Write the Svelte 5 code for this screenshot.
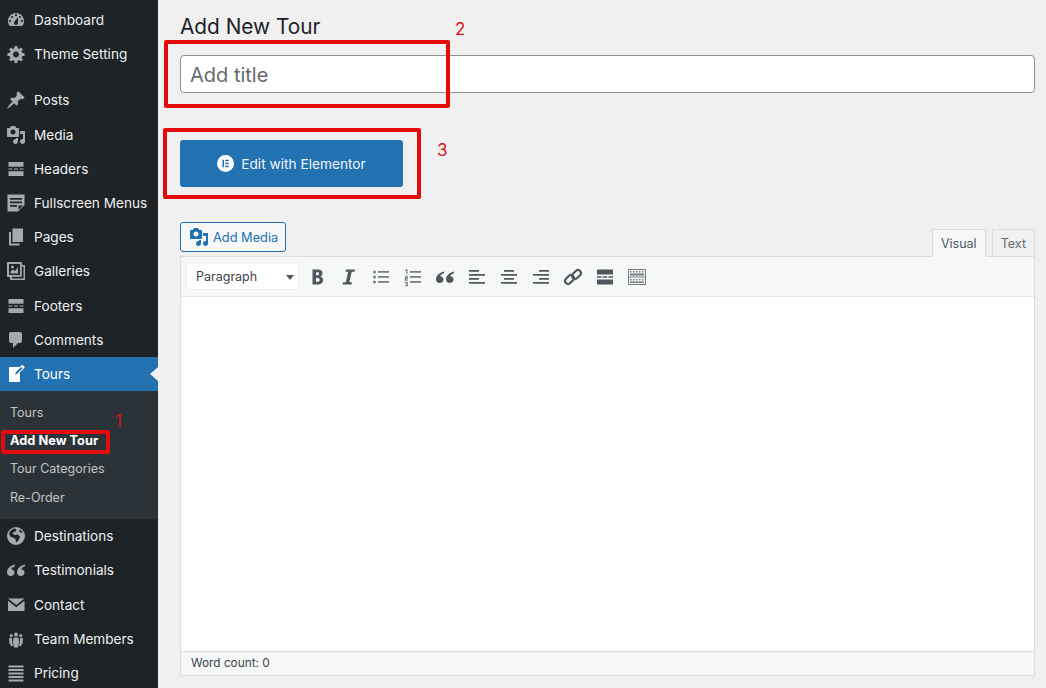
<script>
  const hdr = "M2.500 3h15v4.800h-15zM2.500 9.500h3.800v1H2.500zM7.800 9.500h4.400v1H7.800zM13.700 9.500h3.800v1h-3.800zM2.500 12.200h15V17h-15z";
  const top = [
    { label: "Dashboard", d: "M3.760 16h12.480c1.100-1.370 1.760-3.110 1.760-5 0-4.420-3.580-8-8-8s-8 3.580-8 8c0 1.890.66 3.630 1.760 5zM10 4c.55 0 1 .45 1 1s-.45 1-1 1-1-.45-1-1 .45-1 1-1zM6 6c.55 0 1 .45 1 1s-.45 1-1 1-1-.45-1-1 .45-1 1-1zm8 0c.55 0 1 .45 1 1s-.45 1-1 1-1-.45-1-1 .45-1 1-1zm-5.370 5.550L12 7v6c0 1.100-.9 2-2 2s-2-.9-2-2c0-.57.24-1.080.63-1.450zM4 10c.55 0 1 .45 1 1s-.45 1-1 1-1-.45-1-1 .45-1 1-1zm12 0c.55 0 1 .45 1 1s-.45 1-1 1-1-.45-1-1 .45-1 1-1z" },
    { label: "Theme Setting", d: "M18.500 12h-2.180c-.17.7-.44 1.350-.81 1.930l1.540 1.540-2.100 2.100-1.540-1.540c-.58.36-1.230.63-1.910.79V19h-3v-2.180c-.68-.16-1.330-.43-1.910-.79l-1.540 1.540-2.120-2.120 1.540-1.540c-.36-.58-.63-1.230-.79-1.910H1.500V9.030h2.170c.16-.7.44-1.350.8-1.940L2.930 5.550l2.100-2.100 1.540 1.540c.58-.37 1.240-.64 1.930-.81V2h3v2.180c.68.16 1.330.43 1.910.79l1.540-1.540 2.120 2.120-1.540 1.540c.36.59.64 1.240.8 1.940h2.170V12zM10 13.500c1.660 0 3-1.340 3-3s-1.340-3-3-3-3 1.340-3 3 1.340 3 3 3z" }
  ];
  const media = "M13 11V4c0-.55-.45-1-1-1h-1.670L9 1H5L3.670 3H2c-.55 0-1 .45-1 1v7c0 .55.45 1 1 1h10c.55 0 1-.45 1-1zM7 4.500c1.380 0 2.500 1.120 2.500 2.500S8.380 9.500 7 9.500 4.500 8.380 4.500 7 5.620 4.500 7 4.500zM14 6h5v10.500c0 1.380-1.120 2.500-2.500 2.500S14 17.880 14 16.500s1.120-2.500 2.500-2.500c.17 0 .34.02.5.05V9h-3V6zm-4 8.050V13h2v3.500c0 1.380-1.120 2.500-2.500 2.500S7 17.880 7 16.500 8.120 14 9.500 14c.17 0 .34.02.5.05z";
  const mid = [
    { label: "Posts", d: "M10.440 3.020l1.820-1.820 6.360 6.350-1.830 1.820c-1.050-.68-2.480-.57-3.410.36l-.75.75c-.92.93-1.040 2.350-.35 3.410l-1.830 1.820-2.410-2.410-2.800 2.790c-.42.42-3.380 2.710-3.800 2.290s1.860-3.390 2.280-3.810l2.790-2.790L4.100 9.360l1.830-1.820c1.050.69 2.480.57 3.400-.36l.75-.75c.93-.92 1.050-2.350.36-3.410z" },
    { label: "Media", d: media },
    { label: "Headers", d: hdr },
    { label: "Fullscreen Menus", d: "M1.500 1.500h17V12l-6.500 6.500H1.500zM4 5v1.700h12V5zM4 8.500v1.700h12V8.500zM4 12v1.700h7V12zM12.500 17l4.500-4.500h-4.500z" },
    { label: "Pages", d: "M6.500 15V1.500H17V15zM5 16.500h8.500v2H3V5h2z" },
    { label: "Galleries", d: "M16 4h2c.6 0 1 .4 1 1v13c0 .6-.4 1-1 1H5c-.6 0-1-.4-1-1v-2H2c-.6 0-1-.4-1-1V2c0-.6.4-1 1-1h13c.6 0 1 .4 1 1zM3 14h11V3H3zM14.800 15.800H6V17.500h11.500V5.500h-1.700v9.300c0 .6-.4 1-1 1zM4.500 12.500v-2l2.500-2 2 1.500 3-4v6.500zM6.500 4.500a1.500 1.500 0 1 1 0 3 1.500 1.500 0 0 1 0-3z" },
    { label: "Footers", d: hdr },
    { label: "Comments", d: "M5 2h9c1.100 0 2 .9 2 2v7c0 1.100-.9 2-2 2h-2l-5 5v-5H5c-1.100 0-2-.9-2-2V4c0-1.100.9-2 2-2z" }
  ];
  const sub = ["Tours", "Add New Tour", "Tour Categories", "Re-Order"];
  const quote = "M9 4.500C5 5.500 1 8 1 12.500c0 2 1.500 3.500 3.700 3.500 2.100 0 3.800-1.500 3.800-3.500 0-2-1.500-3.300-3.200-3.300.4-1.300 1.500-2.500 3.700-3zM19 4.500c-4 1-8 3.500-8 8 0 2 1.500 3.500 3.700 3.500 2.100 0 3.800-1.500 3.800-3.500 0-2-1.500-3.300-3.200-3.300.4-1.300 1.500-2.500 3.700-3z";
  const bottom = [
    { label: "Destinations", d: "M10 1a9 9 0 1 0 0 18 9 9 0 0 0 0-18zM3.500 6.500C5 4 7 2.700 9 2.500l1.500 1.500-1 1.500-2 .5L6.500 7.500l2 1.500 3-.5 2.500 2-1 3-2 2.500h-1l-.5-3-2.500-1.500-2-.5-2-3zM13.500 3.500c1.500.8 2.700 2 3.300 3.500l-2.300-.5-1.500-1.500z" },
    { label: "Testimonials", d: quote },
    { label: "Contact", d: "M2 3.500h16.500L10.250 10zM2 5.800l8.250 6.500 8.250-6.500V16H2z" },
    { label: "Team Members", d: "M10 3.500a2 2 0 1 1 0 4 2 2 0 0 1 0-4zM5.200 5a1.600 1.600 0 1 1 0 3.200 1.600 1.600 0 0 1 0-3.200zM14.800 5a1.600 1.600 0 1 1 0 3.200 1.600 1.600 0 0 1 0-3.200zM7.500 8.500h5L13 14l-1 4.500H8L7 14zM3 9h3l.3 5 .7 3H5l-1.500-2.500zM14 9h3l-.5 5.500L15 17h-2l.7-3z" },
    { label: "Pricing", d: "M2.500 2.500h15v2h-15zM2.500 6h15v2h-15zM2.500 9.500h15v2h-15zM2.500 13h15v2h-15zM2.500 16.500h15v2h-15z" }
  ];
  const lines = (rows) => rows.map(([x, y, w]) => `M${x} ${y}h${w}v1.800h-${w}z`).join("");
  const tools = [
    { t: "B", d: "M5.500 2.500h5.500c2.700 0 4.500 1.300 4.500 3.700 0 1.500-.8 2.700-2.200 3.200 1.800.4 2.900 1.800 2.900 3.700 0 2.700-2 4.400-5 4.400H5.500zM9 5.300v3h1.500c1 0 1.600-.6 1.600-1.500s-.6-1.500-1.600-1.500zM9 11v3.700h1.900c1.200 0 1.800-.7 1.800-1.800s-.7-1.900-1.800-1.900z" },
    { t: "I", d: "M7 2.500h9l-.5 2.300h-2.800L10.300 15.200h2.700l-.5 2.300h-9l.5-2.300h2.800L9.200 4.800H6.500z" },
    { t: "ul", soft: true, d: "M3.500 3.500a1.500 1.500 0 1 1 0 3 1.500 1.500 0 0 1 0-3zM3.500 8.500a1.500 1.500 0 1 1 0 3 1.500 1.500 0 0 1 0-3zM3.500 13.500a1.500 1.500 0 1 1 0 3 1.500 1.500 0 0 1 0-3z" + lines([[7, 4, 11], [7, 9, 11], [7, 14, 11]]) },
    { t: "ol", soft: true, d: "M2 3l1.500-.8H4.500V7H3.300V3.500L2 4zM1.800 8.700h3v3.500H3v.6h1.800v.9h-3v-3.500h1.800V9.500H1.800zM1.800 15h3v4.200h-3v-.9h1.800v-.8H2.500v-.7h1.100v-.9H1.800z" + lines([[7, 4, 11], [7, 9, 11], [7, 14, 11]]) },
    { t: "q", d: quote },
    { t: "l", d: lines([[2, 3, 10], [2, 7, 16], [2, 11, 10], [2, 15, 16]]) },
    { t: "c", d: lines([[5, 3, 10], [2, 7, 16], [5, 11, 10], [2, 15, 16]]) },
    { t: "r", d: lines([[8, 3, 10], [2, 7, 16], [8, 11, 10], [2, 15, 16]]) },
    { t: "link", link: true },
    { t: "more", d: "M2 2.500h16v5H2zM2 9.200h4.500v1.600H2zM7.800 9.200h4.400v1.600H7.800zM13.500 9.200H18v1.600h-4.500zM2 12.500h16v5H2z" },
    { t: "kitchen", soft: true, d: "M1 2h18v16H1zM2 3v6.500h16V3zM2 10.500V17h16v-6.500zM3 4h1.500v1.500H3zM6 4h1.500v1.500H6zM9 4h1.500v1.500H9zM12 4h1.500v1.500H12zM15 4h1.500v1.500H15zM3 6.500h14v2H3zM3 12h1.500v1.500H3zM6 12h1.500v1.500H6zM9 12h1.500v1.500H9zM12 12h1.500v1.500H12zM15 12h1.500v1.500H15zM3 14.500h14V16H3z" }
  ];
</script>

{#snippet icon(d, cls)}
  <svg class={cls} viewBox="0 0 20 20" aria-hidden="true"><path {d} fill-rule="evenodd" /></svg>
{/snippet}

{#snippet item(m)}
  <li class="item">
    {@render icon(m.d, "mi")}
    <span>{m.label}</span>
  </li>
{/snippet}

<div class="page">
  <aside class="side">
    <ul class="group first">
      {#each top as m}{@render item(m)}{/each}
    </ul>
    <ul class="group second">
      {#each mid as m}{@render item(m)}{/each}
      <li class="item active">
        {@render icon("M16.890 1.200l1.410 1.410c.39.39.39 1.020 0 1.410L14 8.330V18H3V3h10.670l1.800-1.800c.4-.39 1.030-.4 1.420 0zm-5.660 8.480l5.370-5.360-1.420-1.420-5.360 5.370-.71 2.120z", "mi")}
        <span>Tours</span>
        <i class="caret"></i>
      </li>
      <li class="sub">
        {#each sub as s, i}
          <div class="subitem" class:cur={i === 1}>{s}</div>
        {/each}
      </li>
      {#each bottom as m}{@render item(m)}{/each}
    </ul>
    <div class="mark m1"></div>
    <div class="num n1">1</div>
  </aside>

  <main class="main">
    <h1>Add New Tour</h1>
    <div class="title">Add title</div>
    <button class="elementor">
      <svg class="eicon" viewBox="0 0 18 18" aria-hidden="true"><path fill-rule="evenodd" d="M9 0a9 9 0 1 0 0 18A9 9 0 0 0 9 0zM5.800 5h1.600v8H5.800zM8.600 5h3.800v1.600H8.600zM8.600 8.200h3.800v1.600H8.600zM8.600 11.400h3.800V13H8.600z" /></svg>
      Edit with Elementor
    </button>

    <div class="bar">
      <button class="addmedia">
        {@render icon(media, "ami")}
        Add Media
      </button>
      <div class="tabs">
        <div class="tab on">Visual</div>
        <div class="tab">Text</div>
      </div>
    </div>

    <section class="editor">
      <div class="toolbar">
        <div class="select">Paragraph<i class="arrow"></i></div>
        <div class="tools">
          {#each tools as t}
            <span class="tool" class:soft={t.soft}>
              {#if t.link}
                <svg class="ti" viewBox="0 0 20 20" aria-hidden="true"><g fill="none" stroke="#50575e" stroke-width="2.200"><rect x="1.500" y="9.500" width="10" height="6" rx="3" transform="rotate(-45 6.500 12.500)" /><rect x="8.500" y="4.500" width="10" height="6" rx="3" transform="rotate(-45 13.500 7.500)" /></g></svg>
              {:else}
                {@render icon(t.d, "ti")}
              {/if}
            </span>
          {/each}
        </div>
      </div>
      <div class="body"></div>
      <div class="status">Word count: 0</div>
    </section>

    <div class="mark m2"></div>
    <div class="num n2">2</div>
    <div class="mark m3"></div>
    <div class="num n3">3</div>
  </main>
</div>

<style>
  :global(body) {
    margin: 0;
    overflow: hidden;
    background: #f0f0f1;
    font-family: Inter, "Liberation Sans", sans-serif;
  }
  .page {
    display: flex;
    width: 1046px;
    height: 688px;
    overflow: hidden;
  }
  .side {
    position: relative;
    flex: 0 0 158px;
    height: 688px;
    background: #1e2327;
    overflow: hidden;
  }
  .group {
    list-style: none;
    margin: 0;
    padding: 0;
  }
  .first {
    padding-top: 3px;
    margin-bottom: 12px;
  }
  .item {
    display: flex;
    align-items: center;
    height: 34.2px;
    color: #f0f0f1;
    font-size: 13.600px;
    position: relative;
  }
  .mi {
    width: 20px;
    height: 20px;
    margin-left: 6px;
    margin-right: 8px;
    fill: #a7aaad;
    flex: none;
  }
  .active {
    background: #2271b1;
    color: #fff;
  }
  .active .mi {
    fill: #fff;
  }
  .caret {
    position: absolute;
    right: 0;
    top: 10px;
    border: 7px solid transparent;
    border-right: 8px solid #f0f0f1;
    border-left: 0;
  }
  .sub {
    background: #2c3338;
    padding: 8px 0 7px;
    height: 113px;
  }
  .subitem {
    height: 28.200px;
    line-height: 28.200px;
    padding-left: 10px;
    font-size: 12.500px;
    color: #c3c4c7;
  }
  .cur {
    color: #fff;
    font-weight: 700;
    font-size: 12.800px;
  }
  .main {
    position: relative;
    flex: 1;
    padding: 0 11px 0 22px;
  }
  h1 {
    margin: 0;
    height: 55px;
    padding-top: 13px;
    box-sizing: border-box;
    font-size: 20.800px;
    line-height: 28px;
    font-weight: 400;
    color: #1d2327;
  }
  .title {
    box-sizing: border-box;
    height: 38px;
    background: #fff;
    border: 1px solid #8c8f94;
    border-radius: 4px;
    padding-left: 9px;
    font-size: 20px;
    line-height: 38px;
    color: #646970;
  }
  .elementor {
    display: flex;
    align-items: center;
    justify-content: center;
    gap: 7px;
    width: 223px;
    height: 47px;
    margin-top: 47px;
    background: #2271b1;
    border: 0;
    border-radius: 3px;
    color: #f0f6fc;
    font: 400 13.700px Inter, "Liberation Sans", sans-serif;
  }
  .eicon {
    width: 17px;
    height: 17px;
    fill: #fff;
  }
  .bar {
    display: flex;
    justify-content: space-between;
    align-items: flex-end;
    height: 34px;
    margin-top: 35px;
  }
  .addmedia {
    display: flex;
    align-items: center;
    gap: 4px;
    box-sizing: border-box;
    align-self: flex-start;
    width: 106px;
    height: 30px;
    padding: 0 0 0 8px;
    background: #f6f7f7;
    border: 1px solid #2271b1;
    border-radius: 3px;
    color: #2271b1;
    font: 400 12.800px Inter, "Liberation Sans", sans-serif;
  }
  .ami {
    width: 20px;
    height: 20px;
    fill: #2271b1;
  }
  .tabs {
    display: flex;
    gap: 6px;
    margin-bottom: -1px;
    position: relative;
    z-index: 1;
  }
  .tab {
    box-sizing: border-box;
    height: 28px;
    line-height: 27px;
    padding: 0 8px;
    font-size: 12.500px;
    color: #646970;
    background: #f0f0f1;
    border: 1px solid #dcdcde;
    border-bottom: 1px solid #dcdcde;
  }
  .tab.on {
    width: 54px;
    text-align: center;
    padding: 0;
    color: #50575e;
    background: #f6f7f7;
    border-bottom-color: #f6f7f7;
  }
  .editor {
    box-sizing: border-box;
    height: 420px;
    display: flex;
    flex-direction: column;
    border: 1px solid #dcdcde;
    background: #fff;
  }
  .toolbar {
    display: flex;
    align-items: center;
    box-sizing: border-box;
    height: 40px;
    padding-left: 5px;
    background: #f6f7f7;
    border-bottom: 1px solid #e6e6e8;
  }
  .select {
    position: relative;
    box-sizing: border-box;
    width: 113px;
    height: 27px;
    line-height: 25px;
    padding-left: 9px;
    background: #fff;
    border: 1px solid #f0f0f1;
    font-size: 12.500px;
    color: #3c434a;
  }
  .arrow {
    position: absolute;
    right: 4px;
    top: 11px;
    border: 4px solid transparent;
    border-top: 5px solid #50575e;
    border-bottom: 0;
  }
  .tools {
    display: flex;
    margin-left: 2px;
  }
  .tool {
    display: flex;
    align-items: center;
    justify-content: center;
    width: 32px;
    height: 32px;
  }
  .ti {
    width: 20px;
    height: 20px;
    fill: #50575e;
  }
  .soft .ti {
    fill: #777c82;
  }
  .body {
    flex: 1;
  }
  .status {
    box-sizing: border-box;
    height: 24px;
    line-height: 23px;
    padding-left: 10px;
    background: #f6f7f7;
    border-top: 1px solid #dcdcde;
    font-size: 11.800px;
    color: #3c434a;
  }
  .mark {
    position: absolute;
    box-sizing: border-box;
    border: 4px solid #e30b0b;
    border-radius: 2px;
  }
  .m1 {
    left: 1px;
    top: 430px;
    width: 109px;
    height: 24px;
  }
  .m2 {
    left: 6px;
    top: 40px;
    width: 286px;
    height: 68px;
  }
  .m3 {
    left: 5px;
    top: 128px;
    width: 258px;
    height: 71px;
  }
  .num {
    position: absolute;
    color: #d51414;
    font-size: 17px;
    line-height: 20px;
  }
  .n1 {
    left: 115px;
    top: 411px;
  }
  .n2 {
    left: 297px;
    top: 19px;
  }
  .n3 {
    left: 279px;
    top: 140px;
  }
</style>
